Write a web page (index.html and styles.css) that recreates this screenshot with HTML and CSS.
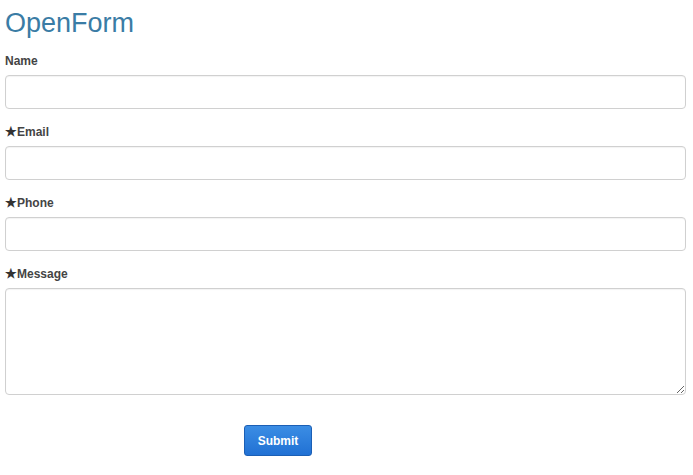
FILE: index.html
```html
<!DOCTYPE html>
<html lang="en">
<head>
    <meta charset="UTF-8">
    <meta name="viewport" content="width=device-width, initial-scale=1.0">
    <title>OpenForm</title>
    <link rel="stylesheet" href="styles.css">
</head>
<body>
    <h1>OpenForm</h1>

    <form id="open-form">
        <label for="name">Name</label>
        <input type="text" id="name">

        <label for="email"><span class="star">&#9733;</span>Email</label>
        <input type="text" id="email" required>

        <label for="phone"><span class="star">&#9733;</span>Phone</label>
        <input type="text" id="phone" required>

        <label for="message"><span class="star">&#9733;</span>Message</label>
        <textarea id="message" required></textarea>

        <div class="actions">
            <button type="button">Submit</button>
        </div>
    </form>
</body>
</html>
```

FILE: styles.css
```css
body {
    font-family: "Liberation Sans", Arial, sans-serif;
    background-color: #ffffff;
    color: #444444;
    margin: 0;
    padding: 0 7px 0 5px;
}

h1 {
    font-size: 27px;
    font-weight: normal;
    color: #3a7ca5;
    line-height: 31px;
    margin: 8px 0 11px 0;
}

label {
    display: block;
    font-size: 12px;
    font-weight: bold;
    line-height: 22px;
    margin-bottom: 3px;
    color: #444444;
}

.star {
    font-size: 13px;
    color: #333333;
}

input[type="text"], textarea {
    display: block;
    box-sizing: border-box;
    width: 100%;
    height: 34px;
    margin: 0 0 12px 0;
    border: 1px solid #d0d0d0;
    border-radius: 4px;
    box-shadow: inset 0 1px 1px rgba(0, 0, 0, 0.05);
    font-family: inherit;
    font-size: 13px;
    padding: 6px 8px;
}

textarea {
    height: 107px;
    margin-bottom: 30px;
}

.actions {
    padding-left: 239px;
}

button {
    width: 68px;
    height: 31px;
    background: linear-gradient(#3b8de4, #2171d4);
    color: white;
    border: 1px solid #1b5fb5;
    border-radius: 3px;
    font-family: inherit;
    font-size: 12px;
    font-weight: bold;
    cursor: pointer;
}

button:hover {
    background: #1f6bc9;
}
```
